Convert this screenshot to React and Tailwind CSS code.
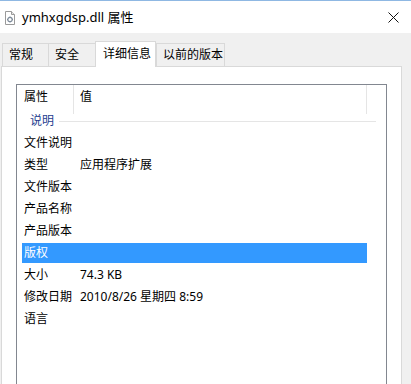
import React from 'react';

const rows = [
  { label: '文件说明', value: '' },
  { label: '类型', value: '应用程序扩展' },
  { label: '文件版本', value: '' },
  { label: '产品名称', value: '' },
  { label: '产品版本', value: '' },
  { label: '版权', value: '', selected: true },
  { label: '大小', value: '74.3 KB' },
  { label: '修改日期', value: '2010/8/26 星期四 8:59' },
  { label: '语言', value: '' },
];

const tabs = [
  { name: '常规', w: 'w-[47px]' },
  { name: '安全', w: 'w-[48px]' },
  { name: '详细信息', w: 'w-[61px]', active: true },
  { name: '以前的版本', w: 'w-[69px]' },
];

const DllIcon = () => (
  <svg width="12" height="14" viewBox="0 0 12 14">
    <path d="M1.5 0.5h6l3 3v10h-9z" fill="#fff" stroke="#9a9a9a" />
    <path d="M7.5 0.5v3h3" fill="#e8e8e8" stroke="#9a9a9a" />
    <circle cx="6" cy="8.5" r="2.2" fill="none" stroke="#7d8a99" strokeWidth="1.2" />
    <path d="M6 5.5v1M6 10.5v1M3 8.5h1M8 8.5h1" stroke="#7d8a99" strokeWidth="1" />
  </svg>
);

export default function App() {
  return (
    <div
      className="w-[411px] h-[384px] overflow-hidden bg-[#f0f0f0] text-[12px] text-black"
      style={{ fontFamily: '"Noto Sans", "Noto Sans CJK SC", sans-serif' }}
    >
      {/* title bar */}
      <div className="h-[33px] bg-white border-t border-[#8fb8e3] flex items-center relative">
        <div className="ml-[4px] mt-[1px]">
          <DllIcon />
        </div>
        <span className="ml-[6px] text-[13px] leading-none">ymhxgdsp.dll 属性</span>
        <svg className="absolute left-[388px] top-[11px]" width="11" height="11" viewBox="0 0 11 11">
          <path d="M0.5 0.5l10 10M10.5 0.5l-10 10" stroke="#111" strokeWidth="1" />
        </svg>
      </div>

      <div className="pl-[1px] pr-[9px]">
        {/* tabs */}
        <div className="flex items-end h-[33px] pl-[1px] relative z-10">
          {tabs.map((t) =>
            t.active ? (
              <div
                key={t.name}
                className={`${t.w} h-[26px] -mb-px bg-white border border-b-0 border-[#d9d9d9] flex items-center pl-[7px] pb-[2px]`}
              >
                {t.name}
              </div>
            ) : (
              <div
                key={t.name}
                className={`${t.w} h-[23px] border border-b-0 border-[#d9d9d9] -mr-px flex items-center pl-[6px] bg-[#f0f0f0]`}
              >
                {t.name}
              </div>
            )
          )}
        </div>

        {/* panel */}
        <div className="h-[330px] bg-white border border-[#d9d9d9] pt-[17px] pl-[14px]">
          <div className="w-[371px] h-[320px] border border-[#828790] bg-white">
            {/* header */}
            <div className="flex h-[25px]">
              <div className="w-[57px] h-[29px] border-r border-[#e5e5e5] pl-[7px] pt-[3px]">
                属性
              </div>
              <div className="w-[293px] h-[29px] border-r border-[#e5e5e5] pl-[6px] pt-[3px]">
                值
              </div>
            </div>
            {/* group */}
            <div className="h-[22px] flex items-center pl-[13px] pr-[10px]">
              <span className="text-[#1e3d8f]">说明</span>
              <div className="flex-1 h-px bg-[#e5e5e5] ml-[5px] mt-px"></div>
            </div>
            {/* rows */}
            {rows.map((r) => (
              <div key={r.label} className="h-[22px] py-px pl-[5px]">
                <div
                  className={`w-[345px] h-[20px] flex items-center ${
                    r.selected ? 'bg-[#3399ff] text-white' : ''
                  }`}
                >
                  <span className="w-[58px] pl-[2px]">{r.label}</span>
                  <span>{r.value}</span>
                </div>
              </div>
            ))}
          </div>
        </div>
      </div>
    </div>
  );
}
